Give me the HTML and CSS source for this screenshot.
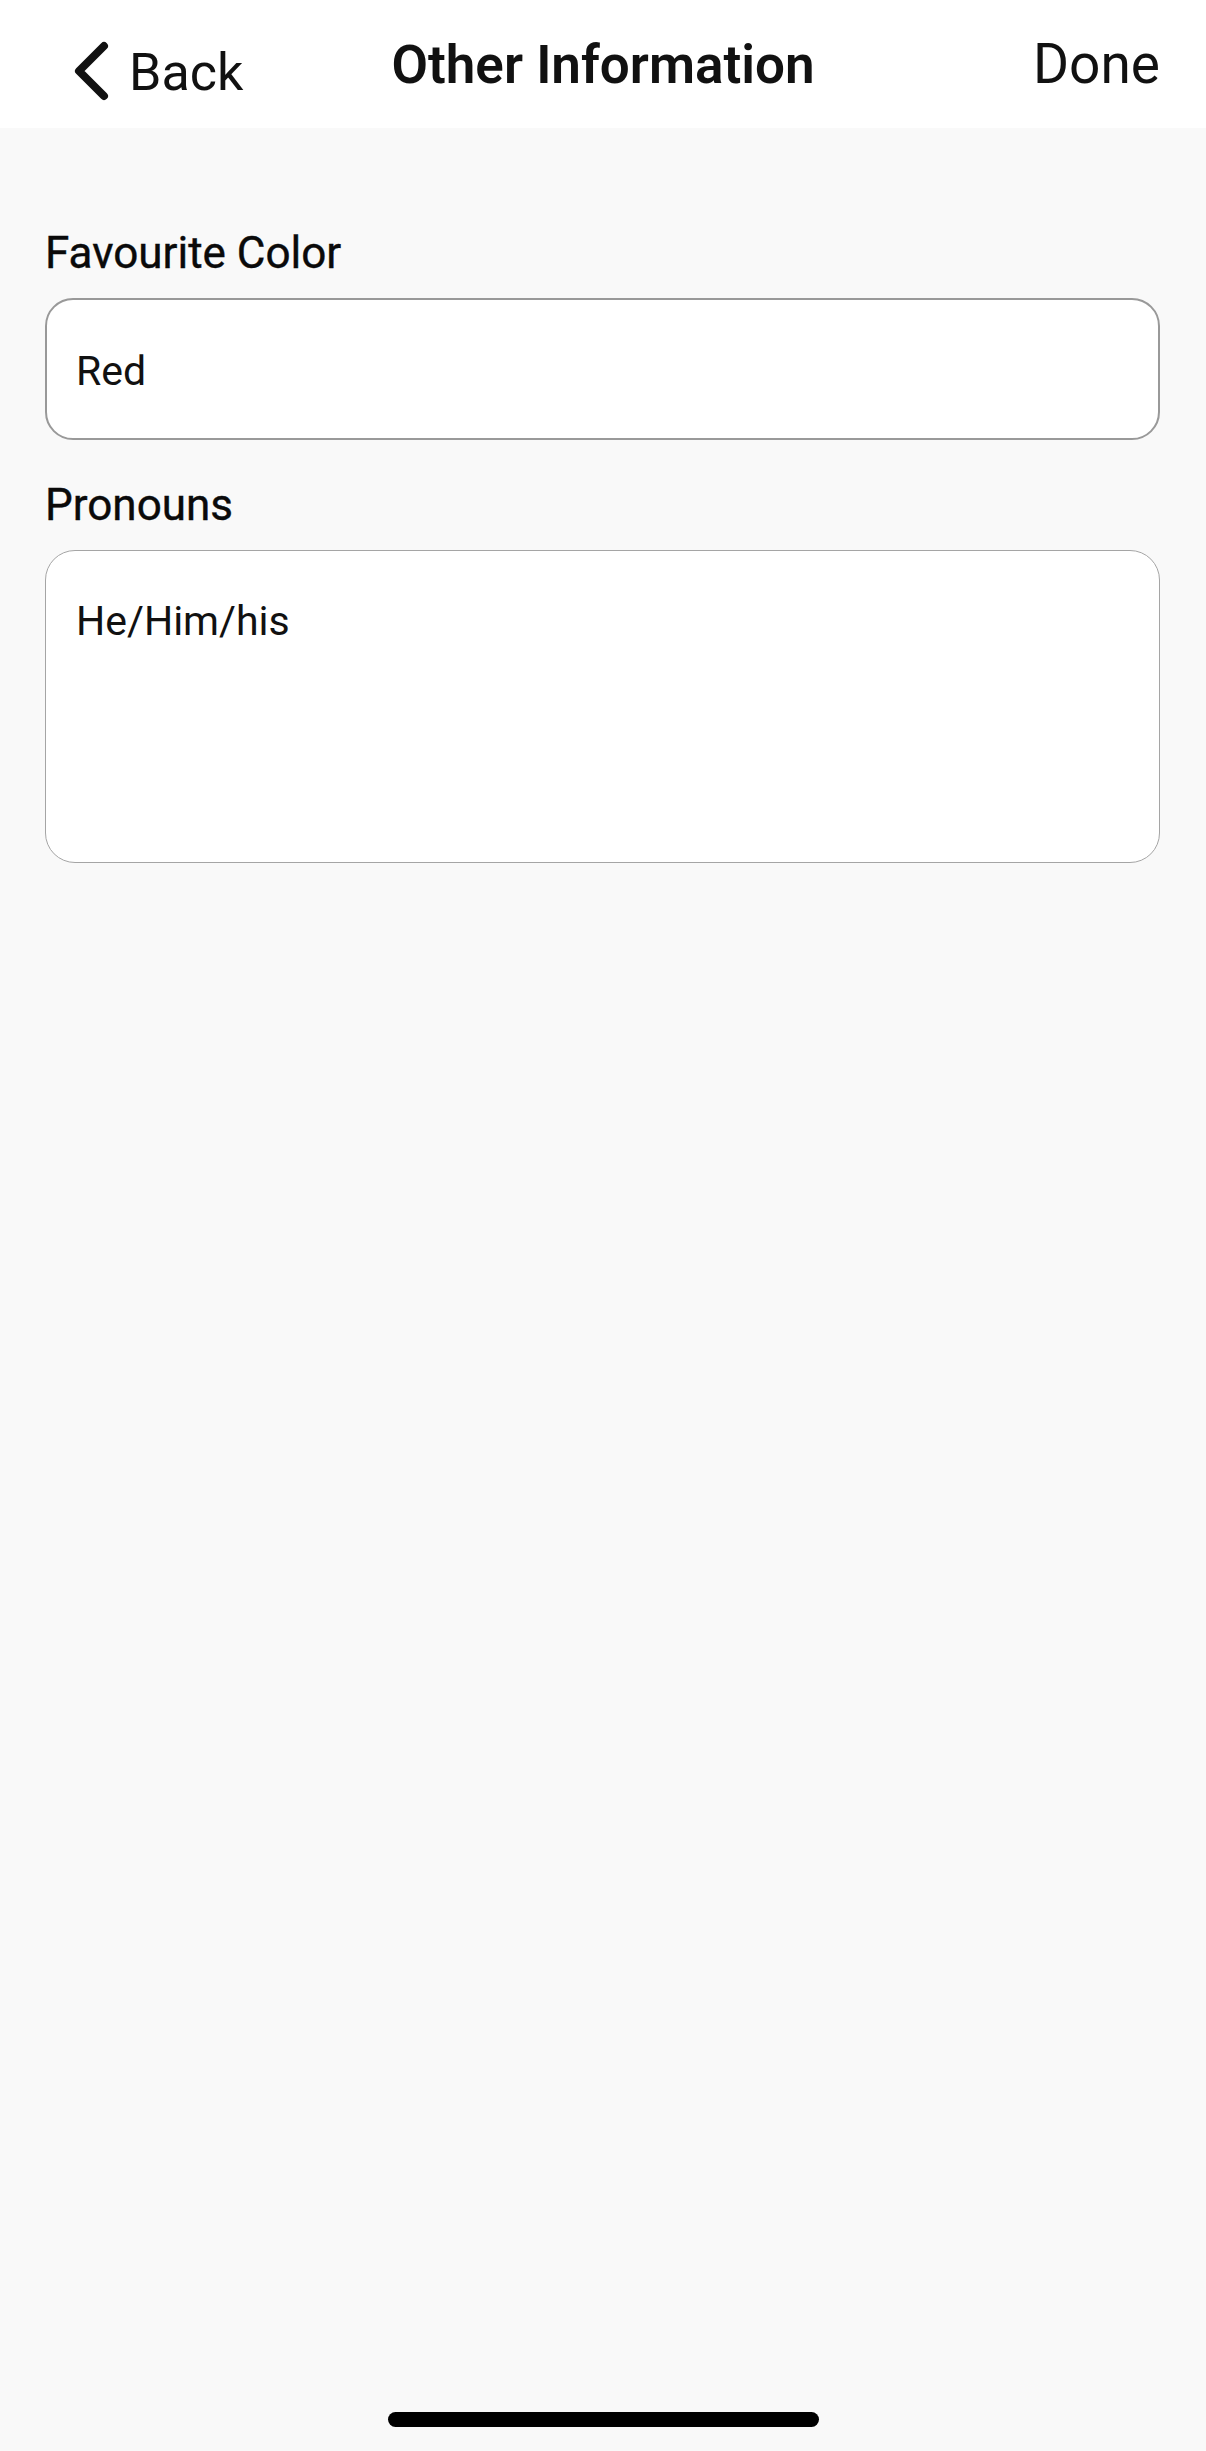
FILE: index.html
```html
<!DOCTYPE html>
<html lang="en">
<head>
    <meta charset="UTF-8">
    <meta name="viewport" content="width=device-width, initial-scale=1.0">
    <title>Other Information</title>
    <link rel="stylesheet" href="styles.css">
</head>
<body>

<div class="screen">
    <div class="nav-bar">
        <button class="nav-back">
            <svg class="back-icon" width="40" height="64" viewBox="0 0 40 64">
                <path d="M34 8 L9 33 L34 58" fill="none" stroke="#111" stroke-width="8" stroke-linecap="round" stroke-linejoin="round"/>
            </svg>
            <span>Back</span>
        </button>
        <div class="nav-title">Other Information</div>
        <button class="nav-done">Done</button>
    </div>

    <div class="form">
        <label class="field-label" for="favColor">Favourite Color</label>
        <input id="favColor" class="field-input" type="text" value="Red">

        <label class="field-label" for="pronouns">Pronouns</label>
        <textarea id="pronouns" class="field-area">He/Him/his</textarea>
    </div>

    <div class="home-bar">
        <div class="home-indicator"></div>
    </div>
</div>

</body>
</html>
```

FILE: styles.css
```css
body {
    margin: 0;
    background-color: #f9f9f9;
    font-family: Roboto, "Liberation Sans", Arial, sans-serif;
    color: #111;
}

.screen {
    min-height: 100vh;
    display: flex;
    flex-direction: column;
}

.nav-bar {
    height: 128px;
    background-color: white;
    display: grid;
    grid-template-columns: 1fr auto 1fr;
    align-items: start;
}

.nav-bar button {
    background: none;
    border: none;
    padding: 0;
    color: #111;
    font-family: inherit;
    cursor: pointer;
}

.nav-back {
    justify-self: start;
    display: flex;
    align-items: flex-start;
    gap: 19px;
    padding-left: 70px !important;
    font-size: 52px;
    line-height: 60px;
}

.back-icon {
    margin-top: 38px;
}

.nav-back span {
    margin-top: 43px;
}

.nav-title {
    margin-top: 35px;
    font-size: 53px;
    line-height: 60px;
    font-weight: 600;
}

.nav-done {
    justify-self: end;
    margin-top: 34px;
    margin-right: 46px;
    font-size: 55px;
    line-height: 60px;
}

.form {
    flex: 1;
    display: flex;
    flex-direction: column;
    padding: 100px 46px 0 45px;
}

.field-label {
    font-size: 44px;
    line-height: 50px;
    margin-bottom: 20px;
    color: #0a0a0a;
    -webkit-text-stroke: 0.4px #0a0a0a;
}

.field-input,
.field-area {
    box-sizing: border-box;
    width: 100%;
    margin: 0;
    background-color: white;
    font-family: inherit;
    font-size: 41px;
    line-height: 46px;
    color: #111;
    outline: none;
}

.field-input {
    height: 142px;
    padding: 4px 29px 0;
    border: 2px solid #999;
    border-radius: 28px;
    margin-bottom: 40px;
}

.field-area {
    height: 313px;
    padding: 47px 29px 0 30px;
    border: 1.5px solid #a5a5a5;
    border-radius: 30px;
    resize: none;
}

.home-bar {
    display: flex;
    justify-content: center;
    padding-bottom: 24px;
}

.home-indicator {
    width: 431px;
    height: 15px;
    border-radius: 8px;
    background-color: black;
}
```
